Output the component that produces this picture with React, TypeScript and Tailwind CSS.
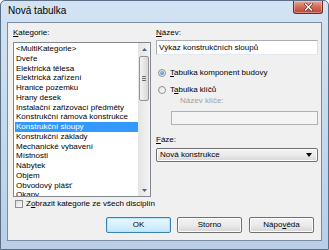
import React from "react";

const items = [
  "<MultiKategorie>",
  "Dveře",
  "Elektrická tělesa",
  "Elektrická zařízení",
  "Hranice pozemku",
  "Hrany desek",
  "Instalační zařizovací předměty",
  "Konstrukční rámová konstrukce",
  "Konstrukční sloupy",
  "Konstrukční základy",
  "Mechanické vybavení",
  "Místnosti",
  "Nábytek",
  "Objem",
  "Obvodový plášť",
  "Okapy",
];

function Btn({ children, def }: { children: React.ReactNode; def?: boolean }) {
  return (
    <div
      className={
        "w-[65px] h-[16px] rounded-[2px] border flex items-center justify-center text-[8px] leading-none " +
        (def
          ? "border-[#3c7fb1] bg-gradient-to-b from-[#eaf6fd] via-[#d9f0fc] to-[#bee6fd] shadow-[inset_0_0_0_1px_#b7e6fc]"
          : "border-[#707070] bg-gradient-to-b from-[#f2f2f2] via-[#ebebeb] to-[#d4d4d4] shadow-[inset_0_0_0_1px_#fcfcfc]")
      }
    >
      {children}
    </div>
  );
}

export default function App() {
  return (
    <div
      className="w-[329px] h-[250px] flex flex-col bg-gradient-to-b from-[#d3e3f3] to-[#b9cfe7] border border-[#5b6f87] rounded-t-[5px] text-black overflow-hidden"
      style={{ fontFamily: '"Liberation Sans", Arial, sans-serif' }}
    >
      {/* title bar */}
      <div className="h-[21px] flex items-start shrink-0">
        <div className="pl-[7px] pt-[4px] text-[10px] leading-[12px] text-black">Nová tabulka</div>
        <div className="ml-auto mr-[5px] w-[30px] h-[13px] rounded-b-[3px] border border-t-0 border-[#6b2b22] bg-gradient-to-b from-[#e7a896] via-[#cf6a57] to-[#c2442f] flex items-center justify-center shadow-[inset_0_0_0_1px_rgba(255,255,255,0.35)]">
          <svg width="9" height="8" viewBox="0 0 9 8">
            <path d="M1.5 1 L7.5 7 M7.5 1 L1.5 7" stroke="#5a2a22" strokeWidth="2.6" strokeLinecap="square" />
            <path d="M1.5 1 L7.5 7 M7.5 1 L1.5 7" stroke="#ffffff" strokeWidth="1.4" strokeLinecap="square" />
          </svg>
        </div>
      </div>

      {/* client area */}
      <div className="mx-[6px] h-[219px] shrink-0 bg-[#f0f0f0] border border-[#7a8ca2] flex flex-col text-[8px] leading-[10px]">
        <div className="flex pt-[5px] pl-[5px]">
          {/* left column */}
          <div className="w-[138px] shrink-0 flex flex-col">
            <div className="h-[10px]"><span className="underline">K</span>ategorie:</div>
            <div className="mt-[4px] h-[155px] border border-[#828790] bg-white flex">
              <div className="flex-1 overflow-hidden pt-[1px] pl-[1px]">
                {items.map((it, i) => (
                  <div
                    key={i}
                    className={
                      "h-[9.75px] leading-[9.75px] pl-[1px] whitespace-nowrap " +
                      (i === 8 ? "bg-[#3399ff] text-white" : "")
                    }
                  >
                    {it}
                  </div>
                ))}
              </div>
              <div className="w-[12px] shrink-0 flex flex-col bg-gradient-to-r from-[#e4e4e4] to-[#f4f4f4]">
                <div className="h-[12px] flex items-center justify-center">
                  <svg width="5" height="3" viewBox="0 0 5 3"><path d="M0 3 L2.5 0 L5 3 Z" fill="#4d6185" /></svg>
                </div>
                <div className="mt-[1px] mx-[1px] h-[45px] rounded-[2px] border border-[#959595] bg-gradient-to-r from-[#f3f3f3] to-[#d8d8d8] flex flex-col items-center justify-center gap-[1px]">
                  <div className="w-[4px] h-[1px] bg-[#6b6b6b]" />
                  <div className="w-[4px] h-[1px] bg-[#6b6b6b]" />
                  <div className="w-[4px] h-[1px] bg-[#6b6b6b]" />
                </div>
                <div className="flex-1" />
                <div className="h-[12px] flex items-center justify-center">
                  <svg width="5" height="3" viewBox="0 0 5 3"><path d="M0 0 L2.5 3 L5 0 Z" fill="#4d6185" /></svg>
                </div>
              </div>
            </div>
            <div className="mt-[2px] h-[9px] flex items-center pl-[2px] overflow-visible">
              <div className="w-[8px] h-[8px] shrink-0 border border-[#8f8f8f] bg-gradient-to-br from-[#dcdcdc] to-[#fbfbfb]" />
              <div className="ml-[3px] shrink-0 whitespace-nowrap">
                Z<span className="underline">o</span>brazit kategorie ze všech disciplín
              </div>
            </div>
          </div>

          {/* right column */}
          <div className="ml-[5px] w-[162px] shrink-0 flex flex-col">
            <div className="h-[10px]"><span className="underline">N</span>ázev:</div>
            <div className="mt-[2px] h-[15px] bg-white border border-[#abadb3] border-b-[#e3e9ef] border-r-[#dbdfe6] pl-[2px] flex items-center whitespace-nowrap">
              Výkaz konstrukčních sloupů
            </div>
            <div className="mt-[13px] h-[10px] flex items-center pl-[2px]">
              <div className="w-[8px] h-[8px] shrink-0 rounded-full border border-[#8f8f8f] bg-gradient-to-br from-[#e4e4e4] to-[#fcfcfc] flex items-center justify-center">
                <div className="w-[4px] h-[4px] rounded-full bg-[radial-gradient(circle_at_40%_35%,#8fd0f7,#1a6bc4)]" />
              </div>
              <div className="ml-[4px] whitespace-nowrap">
                <span className="underline">T</span>abulka komponent budovy
              </div>
            </div>
            <div className="mt-[7px] h-[10px] flex items-center pl-[2px]">
              <div className="w-[8px] h-[8px] shrink-0 rounded-full border border-[#8f8f8f] bg-gradient-to-br from-[#e4e4e4] to-[#fcfcfc]" />
              <div className="ml-[4px] whitespace-nowrap">
                T<span className="underline">a</span>bulka klíčů
              </div>
            </div>
            <div className="mt-[1px] h-[10px] pl-[24px] text-[#a0a0a0]">Název klíče:</div>
            <div className="mt-[5px] ml-[15px] h-[14px] bg-[#f4f4f4] border border-[#adb2b5]" />
            <div className="mt-[10px] h-[10px]"><span className="underline">F</span>áze:</div>
            <div className="mt-[3px] h-[14px] rounded-[2px] border border-[#707070] bg-gradient-to-b from-[#f2f2f2] via-[#ebebeb] to-[#d6d6d6] shadow-[inset_0_0_0_1px_#fcfcfc] flex items-center pl-[3px] pr-[5px]">
              <div className="flex-1 whitespace-nowrap">Nová konstrukce</div>
              <svg width="6" height="4" viewBox="0 0 6 4"><path d="M0 0 L6 0 L3 4 Z" fill="#000" /></svg>
            </div>
          </div>
        </div>

        {/* buttons */}
        <div className="mt-[9px] flex justify-end pr-[7px]">
          <Btn def>OK</Btn>
          <div className="ml-[6px]"><Btn>Storno</Btn></div>
          <div className="ml-[7px]"><Btn>Nápo<span className="underline">v</span>ěda</Btn></div>
        </div>
      </div>
    </div>
  );
}
